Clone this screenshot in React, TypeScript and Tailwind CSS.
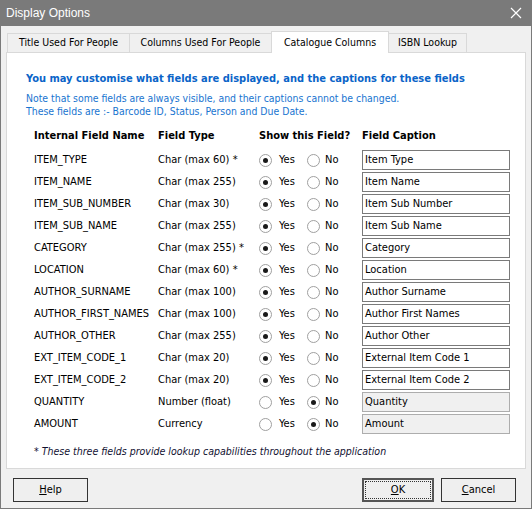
import React from "react";

const rows: { name: string; type: string; star?: boolean; yes: boolean; caption: string; disabled?: boolean }[] = [
  { name: "ITEM_TYPE", type: "Char (max 60)", star: true, yes: true, caption: "Item Type" },
  { name: "ITEM_NAME", type: "Char (max 255)", yes: true, caption: "Item Name" },
  { name: "ITEM_SUB_NUMBER", type: "Char (max 30)", yes: true, caption: "Item Sub Number" },
  { name: "ITEM_SUB_NAME", type: "Char (max 255)", yes: true, caption: "Item Sub Name" },
  { name: "CATEGORY", type: "Char (max 255)", star: true, yes: true, caption: "Category" },
  { name: "LOCATION", type: "Char (max 60)", star: true, yes: true, caption: "Location" },
  { name: "AUTHOR_SURNAME", type: "Char (max 100)", yes: true, caption: "Author Surname" },
  { name: "AUTHOR_FIRST_NAMES", type: "Char (max 100)", yes: true, caption: "Author First Names" },
  { name: "AUTHOR_OTHER", type: "Char (max 255)", yes: true, caption: "Author Other" },
  { name: "EXT_ITEM_CODE_1", type: "Char (max 20)", yes: true, caption: "External Item Code 1" },
  { name: "EXT_ITEM_CODE_2", type: "Char (max 20)", yes: true, caption: "External Item Code 2" },
  { name: "QUANTITY", type: "Number (float)", yes: false, caption: "Quantity", disabled: true },
  { name: "AMOUNT", type: "Currency", yes: false, caption: "Amount", disabled: true },
];

function Radio({ checked }: { checked: boolean }) {
  return (
    <span className="w-[13px] h-[13px] rounded-full border border-[#a0a0a0] bg-white flex items-center justify-center shrink-0">
      {checked && <span className="w-[5px] h-[5px] rounded-full bg-[#1a1a1a]" />}
    </span>
  );
}

const font = "font-['DejaVu_Sans_Condensed','Liberation_Sans',sans-serif]";

export default function App() {
  return (
    <div className={`w-[532px] h-[509px] bg-[#f0f0f0] border border-[#7a7a7a] border-t-0 flex flex-col ${font} text-[11px] text-black overflow-hidden`}>
      <div className="h-[26px] bg-[#7a7a7a] -mx-px flex items-center justify-between pl-[6px] pr-[10px] shrink-0">
        <span className="text-white text-[12px] font-['Liberation_Sans',sans-serif]">Display Options</span>
        <svg width="12" height="12" viewBox="0 0 12 12">
          <path d="M1 1 L11 11 M11 1 L1 11" stroke="#ffffff" strokeWidth="1.2" />
        </svg>
      </div>
      <div className="pl-[5px] pr-[5px] pt-[5px] flex flex-col">
        <div className="flex items-end h-[21px] pl-[1px] relative z-10">
          <div className="h-[19px] w-[123px] border border-[#d9d9d9] border-b-0 bg-[#f0f0f0] flex items-center justify-center text-[10.5px]">Title Used For People</div>
          <div className="h-[19px] w-[142px] border border-[#d9d9d9] border-b-0 border-l-0 bg-[#f0f0f0] flex items-center justify-center text-[10.5px]">Columns Used For People</div>
          <div className="h-[22px] w-[118px] border border-[#d9d9d9] border-b-0 bg-white -ml-px -mb-px flex items-start pt-[3px] justify-center text-[10.5px]">Catalogue Columns</div>
          <div className="h-[19px] w-[78px] border border-[#d9d9d9] border-b-0 border-l-0 bg-[#f0f0f0] flex items-center justify-center text-[10.5px]">ISBN Lookup</div>
        </div>
        <div className="h-[417px] w-[520px] border border-[#d9d9d9] bg-white flex flex-col pt-[18px]">
          <div className="pl-[19px] text-[11px] font-bold text-[#0a64c8] leading-[16px]">
            You may customise what fields are displayed, and the captions for these fields
          </div>
          <div className="pl-[19px] mt-[5px] text-[10.4px] text-[#1874d0] leading-[13px]">
            <div>Note that some fields are always visible, and their captions cannot be changed.</div>
            <div>These fields are :- Barcode ID, Status, Person and Due Date.</div>
          </div>
          <div className="mt-[10px] pl-[27px] flex h-[16px] items-center font-bold text-[11px]">
            <div className="w-[124px]">Internal Field Name</div>
            <div className="w-[101px]">Field Type</div>
            <div className="w-[103px]">Show this Field?</div>
            <div>Field Caption</div>
          </div>
          <div className="mt-[5px] flex flex-col">
            {rows.map((r) => (
              <div key={r.name} className="pl-[27px] h-[22px] flex items-center text-[11px]">
                <div className="w-[124px] whitespace-nowrap">{r.name}</div>
                <div className="w-[101px] whitespace-nowrap">
                  {r.type}
                  {r.star ? " *" : ""}
                </div>
                <div className="w-[103px] flex items-center">
                  <div className="w-[48px] flex items-center gap-[7px]">
                    <Radio checked={r.yes} />
                    <span>Yes</span>
                  </div>
                  <div className="flex items-center gap-[5px]">
                    <Radio checked={!r.yes} />
                    <span>No</span>
                  </div>
                </div>
                <div
                  className={`w-[148px] h-[20px] border flex items-center pl-[2px] whitespace-nowrap ${
                    r.disabled ? "bg-[#f0f0f0] border-[#adadad]" : "bg-white border-[#7a7a7a]"
                  }`}
                >
                  {r.caption}
                </div>
              </div>
            ))}
          </div>
          <div className="mt-[8px] pl-[27px] italic text-[10.5px] leading-[16px] text-[#101030]">
            * These three fields provide lookup capabilities throughout the application
          </div>
        </div>
        <div className="flex items-center mt-[9px] pl-[7px] pr-[10px]">
          <div className="w-[75px] h-[24px] border border-[#333] bg-[#efefef] flex items-center justify-center text-[11px]">
            <span><span className="underline">H</span>elp</span>
          </div>
          <div className="flex-1" />
          <div className="w-[72px] h-[24px] border-2 border-[#555] bg-[#efefef] flex items-center justify-center p-[1px]">
            <div className="w-full h-full border border-dotted border-[#333] flex items-center justify-center text-[11px]">
              <span><span className="underline">O</span>K</span>
            </div>
          </div>
          <div className="w-[75px] h-[24px] ml-[7px] border border-[#333] bg-[#efefef] flex items-center justify-center text-[11px]">
            <span><span className="underline">C</span>ancel</span>
          </div>
        </div>
      </div>
    </div>
  );
}
